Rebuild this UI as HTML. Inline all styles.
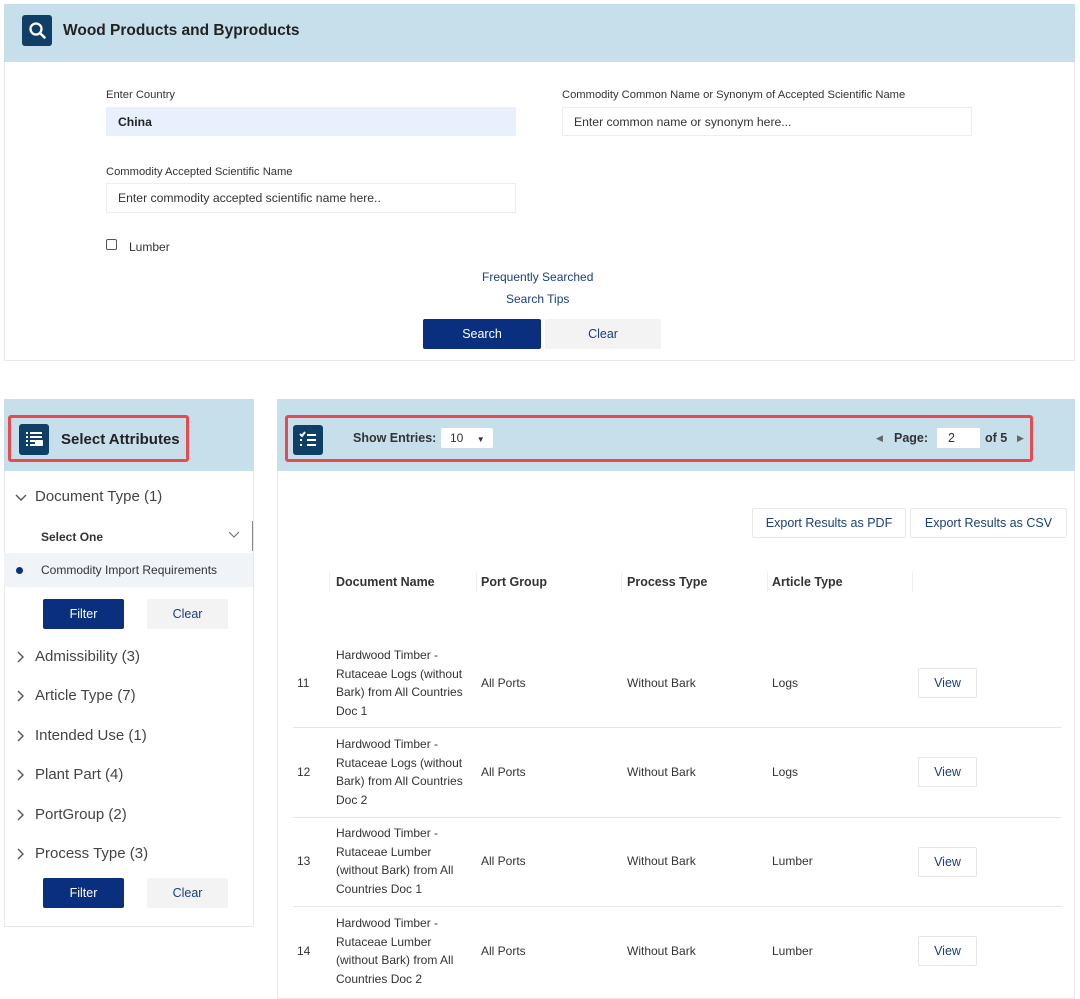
<!DOCTYPE html>
<html><head><meta charset="utf-8"><style>
*{box-sizing:border-box;margin:0;padding:0}
body{width:1080px;height:989px;background:#fff;font-family:"Liberation Sans",Arial,sans-serif;color:#333;position:relative;overflow:hidden}
.a{position:absolute}
.panel{border:1px solid #e8e8e8;background:#fff}
.hdr{background:#c6dfea}
.ibox{background:#0f3e66;border-radius:3px}
.lbl{font-size:11.2px;color:#333}
.inp{border:1px solid #eee;background:#fff;font-size:12.2px;color:#333;padding:0 11px;display:flex;align-items:center}
.btn{display:flex;align-items:center;justify-content:center;font-size:12.5px;border-radius:2px}
.nav{background:#0a2f7f;color:#fff}
.clr{background:#f3f3f3;color:#1a3f7a}
.red{border:3px solid #e84b4f;border-radius:3px}
.cat{font-size:15px;color:#444;left:15px;display:flex;align-items:center}
.cat svg{margin-right:8px}
.cell{font-size:12px;color:#333;line-height:18.5px}
.th{font-size:12.5px;font-weight:bold;color:#333}
.view{border:1px solid #e6e6e6;width:59px;height:30px;font-size:12.5px;color:#1a3f7a;display:flex;align-items:center;justify-content:center;border-radius:2px}
.line{height:1px;background:#e6e6e6;left:293px;width:769px}
</style></head><body>

<div class="a panel" style="left:4px;top:4px;width:1071px;height:357px"></div>
<div class="a hdr" style="left:4px;top:4px;width:1071px;height:58px"></div>
<div class="a ibox" style="left:22px;top:15px;width:30px;height:31px">
<svg width="30" height="31" viewBox="0 0 30 31"><circle cx="14" cy="14" r="5.5" fill="none" stroke="#fff" stroke-width="2.3"/><path d="M18 18l4.5 4.5" stroke="#fff" stroke-width="2.6" stroke-linecap="round"/></svg></div>
<div class="a" style="left:63px;top:22px;font-size:15.5px;font-weight:bold;color:#222">Wood Products and Byproducts</div>

<div class="a lbl" style="left:106px;top:89px">Enter Country</div>
<div class="a inp" style="left:106px;top:107px;width:410px;height:29px;background:#e8f0fe;border-color:#e8f0fe;color:#222;font-weight:bold">China</div>
<div class="a lbl" style="left:562px;top:89px">Commodity Common Name or Synonym of Accepted Scientific Name</div>
<div class="a inp" style="left:562px;top:107px;width:410px;height:29px">Enter common name or synonym here...</div>
<div class="a lbl" style="left:106px;top:166px">Commodity Accepted Scientific Name</div>
<div class="a inp" style="left:106px;top:183px;width:410px;height:30px">Enter commodity accepted scientific name here..</div>
<div class="a" style="left:106px;top:239px;width:11px;height:11px;border:1px solid #555;border-radius:2px"></div>
<div class="a" style="left:129px;top:240px;font-size:12px">Lumber</div>
<div class="a" style="left:482px;top:270px;font-size:12px;color:#1a3f7a">Frequently Searched</div>
<div class="a" style="left:506px;top:292px;font-size:12px;color:#1a3f7a">Search Tips</div>
<div class="a btn nav" style="left:423px;top:319px;width:118px;height:30px">Search</div>
<div class="a btn clr" style="left:545px;top:319px;width:116px;height:30px">Clear</div>

<div class="a panel" style="left:4px;top:399px;width:250px;height:528px"></div>
<div class="a hdr" style="left:4px;top:399px;width:250px;height:72px"></div>
<div class="a red" style="left:8px;top:415px;width:181px;height:47px"></div>
<div class="a ibox" style="left:19px;top:424px;width:30px;height:31px">
<svg width="30" height="31" viewBox="0 0 30 31" fill="#fff"><rect x="7" y="8" width="2" height="2"/><rect x="11" y="8" width="12" height="2"/><rect x="7" y="12" width="2" height="2"/><rect x="11" y="12" width="12" height="2"/><rect x="7" y="16" width="2" height="2"/><rect x="11" y="16" width="5" height="2"/><rect x="7" y="20" width="2" height="2"/><rect x="11" y="20" width="5" height="2"/><rect x="16" y="16" width="8" height="6" rx="1"/></svg></div>
<div class="a" style="left:61px;top:431px;font-size:15px;font-weight:bold;color:#222">Select Attributes</div>
<div class="a cat" style="top:488px"><svg width="12" height="12" viewBox="0 0 12 12"><path d="M1 4l5 5 5-5" fill="none" stroke="#555" stroke-width="1.4"/></svg>Document Type (1)</div>
<div class="a" style="left:41px;top:530px;font-size:12px;font-weight:bold;color:#333">Select One</div>
<svg class="a" style="left:228px;top:531px" width="12" height="8" viewBox="0 0 12 8"><path d="M1 1l5 5 5-5" fill="none" stroke="#777" stroke-width="1.2"/></svg>
<div class="a" style="left:252px;top:521px;width:1px;height:30px;background:#888"></div>
<div class="a" style="left:4px;top:553px;width:249px;height:34px;background:#f0f3f8"></div>
<div class="a" style="left:16px;top:567px;width:7px;height:7px;border-radius:50%;background:#0a2f7f"></div>
<div class="a" style="left:41px;top:563px;font-size:12px;color:#333">Commodity Import Requirements</div>
<div class="a btn nav" style="left:43px;top:599px;width:81px;height:30px">Filter</div>
<div class="a btn clr" style="left:147px;top:599px;width:81px;height:30px">Clear</div>
<div class="a cat" style="top:648px"><svg width="12" height="14" viewBox="0 0 12 14"><path d="M3 2l5 5-5 5" fill="none" stroke="#555" stroke-width="1.4"/></svg>Admissibility (3)</div>
<div class="a cat" style="top:687px"><svg width="12" height="14" viewBox="0 0 12 14"><path d="M3 2l5 5-5 5" fill="none" stroke="#555" stroke-width="1.4"/></svg>Article Type (7)</div>
<div class="a cat" style="top:727px"><svg width="12" height="14" viewBox="0 0 12 14"><path d="M3 2l5 5-5 5" fill="none" stroke="#555" stroke-width="1.4"/></svg>Intended Use (1)</div>
<div class="a cat" style="top:766px"><svg width="12" height="14" viewBox="0 0 12 14"><path d="M3 2l5 5-5 5" fill="none" stroke="#555" stroke-width="1.4"/></svg>Plant Part (4)</div>
<div class="a cat" style="top:806px"><svg width="12" height="14" viewBox="0 0 12 14"><path d="M3 2l5 5-5 5" fill="none" stroke="#555" stroke-width="1.4"/></svg>PortGroup (2)</div>
<div class="a cat" style="top:845px"><svg width="12" height="14" viewBox="0 0 12 14"><path d="M3 2l5 5-5 5" fill="none" stroke="#555" stroke-width="1.4"/></svg>Process Type (3)</div>
<div class="a btn nav" style="left:43px;top:878px;width:81px;height:30px">Filter</div>
<div class="a btn clr" style="left:147px;top:878px;width:81px;height:30px">Clear</div>

<div class="a panel" style="left:277px;top:399px;width:798px;height:600px"></div>
<div class="a hdr" style="left:277px;top:399px;width:798px;height:72px"></div>
<div class="a red" style="left:285px;top:415px;width:748px;height:47px"></div>
<div class="a ibox" style="left:293px;top:425px;width:30px;height:30px">
<svg width="30" height="30" viewBox="0 0 30 30" fill="none" stroke="#fff" stroke-width="2"><path d="M7 9l2 2 3-4"/><path d="M14 10h9M14 15h9M14 20h9"/><path d="M7 15h2M7 20h2"/></svg></div>
<div class="a" style="left:353px;top:431px;font-size:12.5px;font-weight:bold;color:#333">Show Entries:</div>
<div class="a" style="left:441px;top:428px;width:52px;height:20px;background:#fff;border-radius:2px;font-size:12px;padding:3px 0 0 9px">10 <span style="font-size:8px;margin-left:10px">&#9660;</span></div>
<div class="a" style="left:876px;top:433px;font-size:9px;color:#666">&#9664;</div>
<div class="a" style="left:894px;top:431px;font-size:12.5px;font-weight:bold;color:#333">Page:</div>
<div class="a" style="left:937px;top:428px;width:43px;height:20px;background:#fff;font-size:12.5px;padding:3px 0 0 11px">2</div>
<div class="a" style="left:985px;top:431px;font-size:12.5px;font-weight:bold;color:#333">of 5</div>
<div class="a" style="left:1017px;top:433px;font-size:9px;color:#666">&#9654;</div>

<div class="a btn" style="left:752px;top:508px;width:154px;height:30px;border:1px solid #e8e8e8;color:#1a3f7a;font-size:12.5px">Export Results as PDF</div>
<div class="a btn" style="left:910px;top:508px;width:157px;height:30px;border:1px solid #e8e8e8;color:#1a3f7a;font-size:12.5px">Export Results as CSV</div>

<div class="a th" style="left:336px;top:575px">Document Name</div>
<div class="a th" style="left:481px;top:575px">Port Group</div>
<div class="a th" style="left:627px;top:575px">Process Type</div>
<div class="a th" style="left:772px;top:575px">Article Type</div>
<div class="a" style="left:329px;top:572px;width:1px;height:20px;background:#eee"></div>
<div class="a" style="left:476px;top:572px;width:1px;height:20px;background:#eee"></div>
<div class="a" style="left:621px;top:572px;width:1px;height:20px;background:#eee"></div>
<div class="a" style="left:767px;top:572px;width:1px;height:20px;background:#eee"></div>
<div class="a" style="left:912px;top:572px;width:1px;height:20px;background:#eee"></div>

<div class="a cell" style="left:297px;top:674px">11</div>
<div class="a cell" style="left:336px;top:646px;width:135px">Hardwood Timber - Rutaceae Logs (without Bark) from All Countries Doc 1</div>
<div class="a cell" style="left:481px;top:674px">All Ports</div>
<div class="a cell" style="left:627px;top:674px">Without Bark</div>
<div class="a cell" style="left:772px;top:674px">Logs</div>
<div class="a view" style="left:918px;top:668px">View</div>
<div class="a line" style="top:727px"></div>

<div class="a cell" style="left:297px;top:763px">12</div>
<div class="a cell" style="left:336px;top:735px;width:135px">Hardwood Timber - Rutaceae Logs (without Bark) from All Countries Doc 2</div>
<div class="a cell" style="left:481px;top:763px">All Ports</div>
<div class="a cell" style="left:627px;top:763px">Without Bark</div>
<div class="a cell" style="left:772px;top:763px">Logs</div>
<div class="a view" style="left:918px;top:757px">View</div>
<div class="a line" style="top:817px"></div>

<div class="a cell" style="left:297px;top:852px">13</div>
<div class="a cell" style="left:336px;top:824px;width:130px">Hardwood Timber - Rutaceae Lumber (without Bark) from All Countries Doc 1</div>
<div class="a cell" style="left:481px;top:852px">All Ports</div>
<div class="a cell" style="left:627px;top:852px">Without Bark</div>
<div class="a cell" style="left:772px;top:852px">Lumber</div>
<div class="a view" style="left:918px;top:847px">View</div>
<div class="a line" style="top:906px"></div>

<div class="a cell" style="left:297px;top:942px">14</div>
<div class="a cell" style="left:336px;top:914px;width:130px">Hardwood Timber - Rutaceae Lumber (without Bark) from All Countries Doc 2</div>
<div class="a cell" style="left:481px;top:942px">All Ports</div>
<div class="a cell" style="left:627px;top:942px">Without Bark</div>
<div class="a cell" style="left:772px;top:942px">Lumber</div>
<div class="a view" style="left:918px;top:936px">View</div>
</body></html>
